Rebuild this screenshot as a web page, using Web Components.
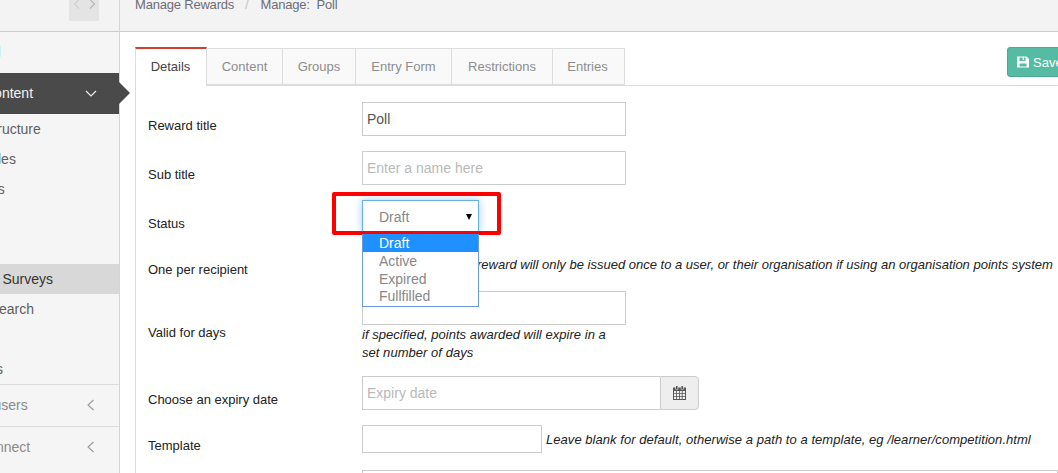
<!DOCTYPE html>
<html><head><meta charset="utf-8"><title>Manage: Poll</title>
<style>
html,body{margin:0;padding:0;height:473px;overflow:hidden;background:#fff;font:13px "Liberation Sans",Arial,sans-serif;color:#222}
</style></head><body>
<app-shell>
  <side-nav slot="side">
    <nav-item kind="main" label="Content" shift="-16"></nav-item>
    <nav-item label="Structure" shift="-16"></nav-item>
    <nav-item label="Articles" shift="-30"></nav-item>
    <nav-item label="Lists" shift="-24"></nav-item>
    <nav-item label=""></nav-item>
    <nav-item label=""></nav-item>
    <nav-item kind="current" label="Polls &amp; Surveys" shift="-45"></nav-item>
    <nav-item label="Research" shift="-26"></nav-item>
    <nav-item label=""></nav-item>
    <nav-item label="Reports" shift="-46"></nav-item>
    <nav-item kind="group" label="Manage users" shift="-61"></nav-item>
    <nav-item kind="group" label="Connect" shift="-22"></nav-item>
  </side-nav>
  <bread-bar slot="top"></bread-bar>
  <tab-strip slot="main"></tab-strip>
  <form-panel slot="main">
    <form-row label="Reward title"><text-box value="Poll"></text-box></form-row>
    <form-row label="Sub title"><text-box placeholder="Enter a name here"></text-box></form-row>
    <form-row label="Status" style="--row-h:31px"><status-select></status-select></form-row>
    <form-row label="One per recipient" style="--row-h:30px"><span style="display:block;padding:10px 0 0 115px;font-style:italic;font-size:13px;line-height:18px;white-space:nowrap;color:#222">reward will only be issued once to a user, or their organisation if using an organisation points system</span></form-row>
    <form-row label="Valid for days" style="--label-top:33px"><text-box></text-box><help-text>if specified, points awarded will expire in a set number of days</help-text></form-row>
    <form-row label="Choose an expiry date"><date-box></date-box></form-row>
    <form-row label="Template" style="--label-top:12px"><template-field></template-field></form-row>
    <form-row label=""><div style="height:30px;border:1px solid #ccc;box-sizing:border-box"></div></form-row>
  </form-panel>
</app-shell>
<script>
function def(name, html, init){
  customElements.define(name, class extends HTMLElement{
    constructor(){super();this.attachShadow({mode:'open'}).innerHTML=html;}
    connectedCallback(){ if(init) init(this); }
  });
}
def('app-shell',`<style>
:host{display:flex;width:1058px;height:473px;overflow:hidden}
.side{width:120px;flex:none;box-sizing:border-box;background:#f5f5f5;border-right:1px solid #d5d5d5;position:relative}
.right{flex:1;min-width:0;display:flex;flex-direction:column}
.body{padding:15px 0 0 15px;display:flex;flex-direction:column;flex:1;min-height:0}
</style><div class="side"><slot name="side"></slot></div>
<div class="right"><slot name="top"></slot><div class="body"><slot name="main"></slot></div></div>`);

def('side-nav',`<style>
:host{display:block}
.top{height:31px;border-bottom:1px solid #ccc;background:#f3f3f3;display:flex;justify-content:flex-end;padding-right:20px}
.pager{width:30px;height:21px;background:#e4e4e4;display:flex;align-items:flex-start;justify-content:center;gap:7px}
.pager svg{margin-top:-2px}
.gap{height:41px;position:relative}
.tick{position:absolute;left:0;top:14px;width:1px;height:11px;background:#c8f4f8}
</style><div class="top"><div class="pager">
<svg width="8" height="12" viewBox="0 0 8 12"><path d="M6 1.5 1.5 6 6 10.5" fill="none" stroke="#cfcfcf" stroke-width="1.1"/></svg>
<svg width="8" height="12" viewBox="0 0 8 12"><path d="M2 1.5 6.5 6 2 10.5" fill="none" stroke="#b5b5b5" stroke-width="1.1"/></svg>
</div></div><div class="gap"><div class="tick"></div></div><slot></slot>`);

def('nav-item',`<style>
:host{display:block;height:30px;position:relative;font-size:14px;color:#5f5f5f}
.row{display:flex;align-items:center;height:100%;white-space:nowrap;overflow:hidden;box-sizing:border-box;width:119px;position:relative}
:host([kind=main]){height:41px;color:#f2f2f2;background:#4a4a4a;width:119px}
:host([kind=current]){background:#d8d8d8;color:#333;width:119px}
:host([kind=group]){height:41px;color:#8a8a8a;border-top:1px solid #dcdcdc;width:119px}
:host([kind=main]) .row,:host([kind=group]) .row{padding-bottom:2px}
svg{position:absolute;left:85px;top:14px;display:none}
.tip{display:none;position:absolute;left:119px;top:9px;width:0;height:0;border-style:solid;border-width:11.5px 0 11.5px 11px;border-color:transparent transparent transparent #4a4a4a}
:host([kind=main]) .tip{display:block}
:host([kind=main]) .down,:host([kind=group]) .left{display:block}
</style><div class="row"><span class="t"></span>
<svg class="down" width="12" height="12" viewBox="0 0 12 12" style="top:15px"><path d="M1 3 6 8 11 3" fill="none" stroke="#eee" stroke-width="1.2"/></svg>
<svg class="left" width="12" height="12" viewBox="0 0 12 12" style="left:85px"><path d="M8.5 1 3 6 8.5 11" fill="none" stroke="#999" stroke-width="1.1"/></svg>
</div><div class="tip"></div>`, el=>{
  const t=el.shadowRoot.querySelector('.t');
  t.textContent=el.getAttribute('label')||'';
  t.style.marginLeft=(el.getAttribute('shift')||0)+'px';
});

def('bread-bar',`<style>
:host{display:flex;height:31px;flex:none;box-sizing:content-box;background:#f3f3f3;border-bottom:1px solid #ccc;padding-left:15px;font-size:13px;color:#6d6d78;align-items:flex-start;line-height:10px;overflow:hidden;letter-spacing:-.2px}
.sep{color:#c4c4c4;margin:0 12px 0 11px}
</style><span>Manage Rewards</span><span class="sep">/</span><span>Manage:&nbsp; Poll</span>`);

def('tab-strip',`<style>
:host{display:flex;height:38px;flex:none;border-bottom:1px solid #ddd;position:relative;box-sizing:content-box;font-size:13px}
.tab{box-sizing:border-box;height:37px;margin-top:1px;border:1px solid #ddd;border-left:0;background:#f9f9f9;color:#8d8d8d;display:flex;align-items:center;justify-content:center}
.on{height:39px;margin-top:0;border-top:2px solid #d0402f;border-bottom:0;border-left:1px solid #ddd;background:#fff;color:#444;width:72px;padding:0 1px 3px 0}
.last{padding-right:2px}
.save{position:absolute;left:872px;top:0;height:30px;width:80px;box-sizing:border-box;background:#55bba3;border:1px solid #4aab94;border-radius:3px;color:#fff;display:flex;align-items:center;padding-left:9px;gap:4px;font-size:13px}
</style>
<div class="tab on">Details</div>
<div class="tab" style="width:76px">Content</div>
<div class="tab" style="width:73px">Groups</div>
<div class="tab" style="width:96px">Entry Form</div>
<div class="tab" style="width:101px">Restrictions</div>
<div class="tab last" style="width:72px">Entries</div>
<div class="save"><svg width="12" height="12" viewBox="0 0 12 12"><path fill="#fff" d="M0 .5h9.5L12 3v8.5H0zM2.5 1.5v3.6h6V1.5H7v2.6H5.6V1.5zM2.5 7.4v3.1h7V7.4z"/></svg><span>Save</span></div>`);

def('form-panel',`<style>
:host{display:block;flex:1;border-left:1px solid #ddd;padding:16px 0 0 12px;position:relative}
</style><slot></slot>`);

def('form-row',`<style>
:host{display:grid;grid-template-columns:214px 1fr;margin-bottom:15px;min-height:var(--row-h,0);height:var(--row-h,auto);font-size:13px}
.l{padding-top:var(--label-top,15px);line-height:18px;color:#222;white-space:nowrap}
</style><div class="l"></div><div class="c"><slot></slot></div>`, el=>{
  el.shadowRoot.querySelector('.l').textContent=el.getAttribute('label')||'';
});

const boxCss=`input{box-sizing:border-box;display:block;height:34px;border:1px solid #ccc;padding:0 4px;font:14px "Liberation Sans",Arial,sans-serif;color:#555;outline:0;background:#fff;margin:0;border-radius:0}
input::placeholder{color:#b9b9b9;opacity:1}`;
def('text-box',`<style>:host{display:block;width:264px}${boxCss}input{width:264px}</style><input>`, el=>{
  const i=el.shadowRoot.querySelector('input');
  if(el.hasAttribute('value')) i.setAttribute('value',el.getAttribute('value'));
  if(el.hasAttribute('placeholder')) i.placeholder=el.getAttribute('placeholder');
});

def('help-text',`<style>:host{display:block;width:250px;height:36px;font-style:italic;font-size:13px;line-height:18px;color:#222;letter-spacing:.04px;position:relative}
.t{display:block;padding-top:1px;margin-bottom:-1px}</style><span class="t"><slot></slot></span>`);

def('date-box',`<style>:host{display:flex;width:337px}${boxCss}input{flex:1;min-width:0;border-right:0}
.a{width:39px;height:34px;box-sizing:border-box;background:#eee;border:1px solid #ccc;border-radius:0 4px 4px 0;display:flex;align-items:center;justify-content:center}
</style><input placeholder="Expiry date"><div class="a"><svg width="13" height="14" viewBox="0 0 13 14"><path fill="#555" d="M3 0h1.6v3H3zM8.4 0H10v3H8.4zM0 1.6h2.4v2h2.8v-2h2.6v2h2.8v-2H13V14H0zM1 5v2h2.2V5zm3 0v2h2V5zm2.8 0v2h2V5zm2.8 0v2H12V5zM1 7.8V10h2.2V7.8zm3 0V10h2V7.8zm2.8 0V10h2V7.8zm2.8 0V10H12V7.8zM1 10.8V13h2.2v-2.2zm3 0V13h2v-2.2zm2.8 0V13h2v-2.2zm2.8 0V13H12v-2.2z"/></svg></div>`);

def('template-field',`<style>:host{display:flex;align-items:center;white-space:nowrap;height:28px}${boxCss}input{width:180px;height:28px;flex:none}
span{margin-left:4px;font-style:italic;font-size:13px;color:#222;letter-spacing:.05px}</style><input><span>Leave blank for default, otherwise a path to a template, eg /learner/competition.html</span>`);

def('status-select',`<style>
:host{display:block;position:relative;width:117px;height:33px;font-size:14px}
.box{box-sizing:border-box;height:33px;border:1px solid #66afe9;box-shadow:0 0 8px rgba(102,175,233,.6);background:#fff;color:#888;display:flex;align-items:center;padding-left:16px;position:relative}
.arrow{position:absolute;right:6px;top:13px;width:0;height:0;border-style:solid;border-width:6px 3.5px 0;border-color:#000 transparent transparent}
.menu{position:absolute;left:0;top:34px;width:117px;box-sizing:border-box;border:1px solid #6a9bd8;border-top:0;background:#fff;color:#888;line-height:18px;z-index:3;height:73px}
.o{padding-left:16px;height:18px}
.o:nth-child(3){height:17px}
.sel{background:#1e90ff;color:#fff}
.mark{position:absolute;left:-30px;top:-8px;width:169px;height:43px;box-sizing:border-box;border:4px solid #f00;border-radius:2px;z-index:2;pointer-events:none}
</style><div class="box">Draft<div class="arrow"></div></div>
<div class="mark"></div>
<div class="menu"><div class="o sel">Draft</div><div class="o">Active</div><div class="o">Expired</div><div class="o">Fullfilled</div></div>`);
</script>
</body></html>
